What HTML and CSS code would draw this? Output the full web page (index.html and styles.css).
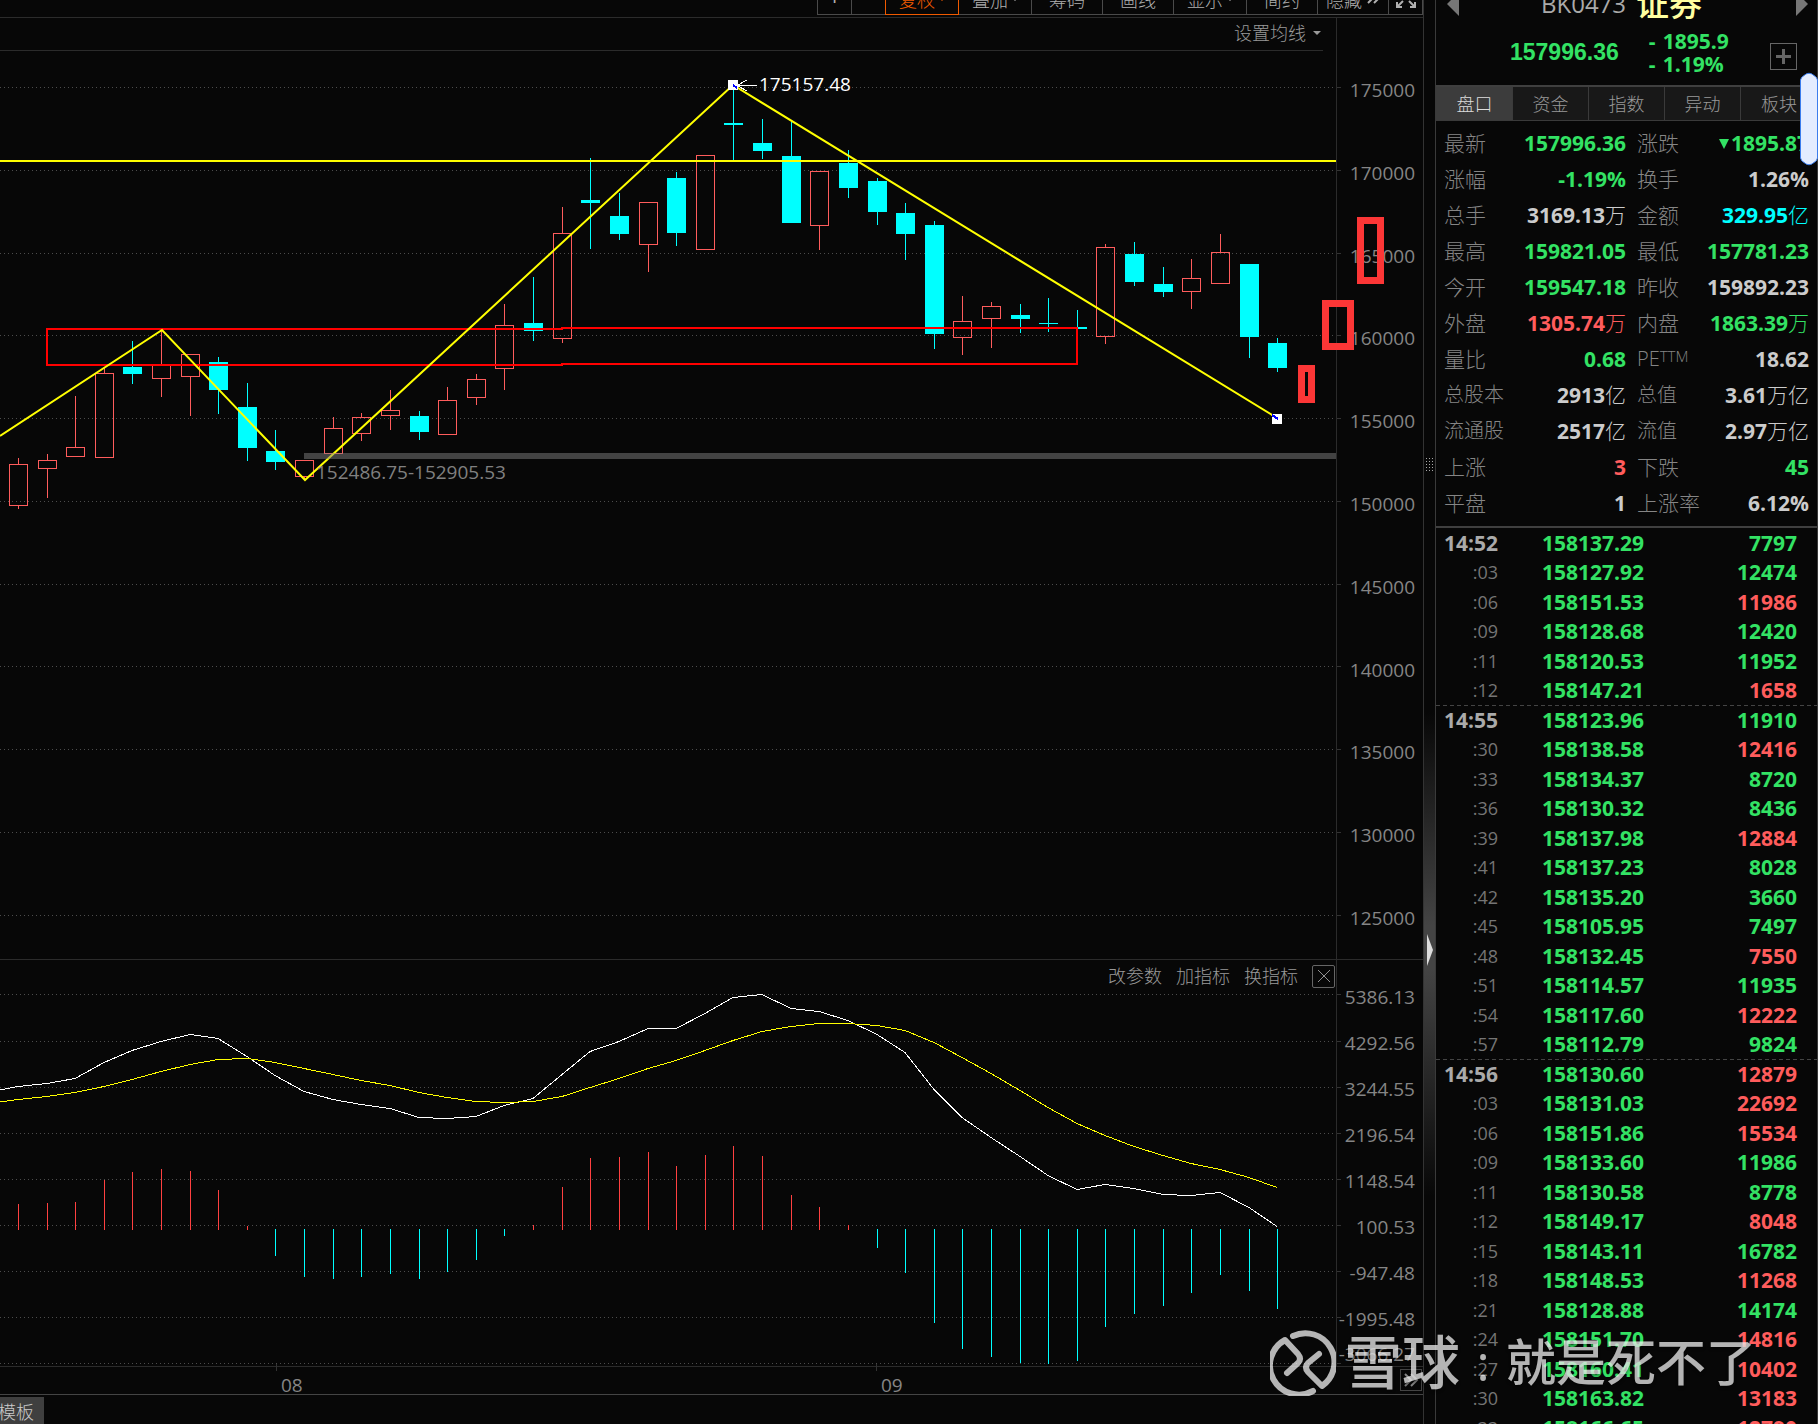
FILE: index.html
```html
<!DOCTYPE html>
<html lang="zh-CN">
<head>
  <meta charset="UTF-8" />
  <title>证券 BK0473</title>
  <link rel="stylesheet" href="styles.css">
</head>
<body>

<div class="app">
  <main class="chart-pane">
    <div class="toolbar">
      <button class="tool small plus">+</button>
      <button class="tool small"></button>
      <button class="tool wide active">复权<i class="caret"></i></button>
      <button class="tool wide">叠加<i class="caret"></i></button>
      <button class="tool">筹码</button>
      <button class="tool">画线</button>
      <button class="tool wide">显示<i class="caret"></i></button>
      <button class="tool">简约</button>
      <button class="tool">隐藏<svg width="14" height="10" viewBox="0 0 14 10"><path d="M2 1l4 4-4 4M8 1l4 4-4 4"/></svg></button>
      <button class="tool small" aria-label="全屏"><svg width="22" height="20" viewBox="0 0 22 20"><path d="M2 7V2h5M2 2l6 6M20 7V2h-5M20 2l-6 6M2 13v5h5M2 18l6-6M20 13v5h-5M20 18l-6-6"/></svg></button>
    </div>

    <section class="panel price">
      <div class="plot">
        <div class="plot-head">
          <button class="link">设置均线<i class="caret"></i></button>
        </div>
        <svg class="drawing" id="price-chart" viewBox="0 51 1336 908"></svg>
      </div>
      <ul class="axis price-axis" id="price-axis"></ul>
    </section>

    <section class="panel indicator">
      <div class="plot">
        <div class="plot-head">
          <button class="link">改参数</button>
          <button class="link">加指标</button>
          <button class="link">换指标</button>
          <button class="close" aria-label="关闭"><svg width="12" height="12" viewBox="0 0 12 12"><path d="M0 0l12 12M12 0L0 12"/></svg></button>
        </div>
        <svg class="drawing" id="macd-chart" viewBox="0 990 1336 376"></svg>
      </div>
      <ul class="axis macd-axis" id="macd-axis"></ul>
    </section>

    <div class="dates">
      <span>08</span>
      <span>09</span>
      <button class="more" aria-label="更多"><svg width="18" height="18" viewBox="0 0 18 18"><path d="M3 3l6 6-6 6M9 3l6 6-6 6"/></svg></button>
    </div>
    <div class="bottom-bar">
      <button class="template">模板</button>
    </div>
  </main>

  <div class="splitter">
    <svg class="grip" width="7" height="13" viewBox="0 0 7 13"><path d="M0 .5h7M0 3.5h7M0 6.5h7M0 9.5h7M0 12.5h7"/></svg>
    <svg class="handle" width="6" height="32" viewBox="0 0 6 32"><path d="M0 0L6 16L0 32Z"/></svg>
  </div>

  <aside class="quote">
    <header class="quote-head">
      <div class="name-row">
        <button class="arrow" aria-label="上一个"><svg width="12" height="24" viewBox="0 0 12 24"><path d="M12 0v24L0 12Z"/></svg></button>
        <h1><span class="code">BK0473</span><span>证券</span></h1>
        <button class="arrow" aria-label="下一个"><svg width="12" height="24" viewBox="0 0 12 24"><path d="M0 0v24l12-12Z"/></svg></button>
      </div>
      <div class="last-row">
        <strong class="last">157996.36</strong>
        <div class="change">
          <div><span class="sign">-</span>1895.9</div>
          <div><span class="sign">-</span>1.19%</div>
        </div>
        <button class="add" aria-label="加自选"><svg width="15" height="15" viewBox="0 0 15 15"><path d="M7.5 0v15M0 7.5h15"/></svg></button>
      </div>
    </header>

    <nav class="tabs">
      <button class="tab current">盘口</button>
      <button class="tab">资金</button>
      <button class="tab">指数</button>
      <button class="tab">异动</button>
      <button class="tab">板块</button>
    </nav>

    <table class="stats">
      <tr><th>最新</th><td class="down">157996.36</td><th>涨跌</th><td class="down"><i class="fall"></i>1895.87</td></tr>
      <tr><th>涨幅</th><td class="down">-1.19%</td><th>换手</th><td>1.26%</td></tr>
      <tr><th>总手</th><td>3169.13<small>万</small></td><th>金额</th><td class="amount">329.95<small>亿</small></td></tr>
      <tr><th>最高</th><td class="down">159821.05</td><th>最低</th><td class="down">157781.23</td></tr>
      <tr><th>今开</th><td class="down">159547.18</td><th>昨收</th><td>159892.23</td></tr>
      <tr><th>外盘</th><td class="up">1305.74<small>万</small></td><th>内盘</th><td class="down">1863.39<small>万</small></td></tr>
      <tr><th>量比</th><td class="down">0.68</td><th class="latin">PE<sup>TTM</sup></th><td>18.62</td></tr>
      <tr class="tight"><th>总股本</th><td>2913<small>亿</small></td><th>总值</th><td>3.61<small>万亿</small></td></tr>
      <tr class="tight"><th>流通股</th><td>2517<small>亿</small></td><th>流值</th><td>2.97<small>万亿</small></td></tr>
      <tr><th>上涨</th><td class="up">3</td><th>下跌</th><td class="down">45</td></tr>
      <tr><th>平盘</th><td>1</td><th>上涨率</th><td>6.12%</td></tr>
    </table>

    <div class="ticks-wrap">
      <table class="ticks">
        <tbody id="ticks"></tbody>
      </table>
    </div>

    <svg class="scroll-pill" width="18" height="94" viewBox="0 0 18 94"><path d="M.5 8Q1 5 4 3.500Q9-1 14 3.500Q17 5 17.500 8V86Q17 89 14 90.500Q9 95 4 90.500Q1 89 .5 86Z"/></svg>
  </aside>
</div>

<div class="watermark">
  <svg width="66" height="66" viewBox="0 0 66 66"><path d="M23 6A29 29 0 0 1 52 56L38 42Q34 37 38 33L49 24"/><path d="M43 61A29 29 0 0 1 15 10L28 24Q32 29 28 33L17 43"/></svg>
  <span class="brand">雪球</span>
  <span class="colon">:</span>
  <span class="author">就是死不了</span>
</div>

<script>
// direction, high, body top, body bottom, low (chart units)
const candles = [
  ['u',458,464,505,509], ['u',454,460,468,498], ['u',396,447,456,456], ['u',368,373,457,457],
  ['d',341,367,374,384], ['u',330,365,378,397], ['u',354,354,376,416], ['d',357,362,390,414],
  ['d',383,407,448,461], ['d',430,451,462,470], ['u',460,460,476,480], ['u',417,428,453,453],
  ['u',413,417,433,441], ['u',390,410,415,430], ['d',411,416,432,440], ['u',387,400,434,434],
  ['u',374,379,397,405], ['u',304,325,368,390], ['d',277,323,331,341], ['u',207,233,338,343],
  ['d',158,200,203,249], ['d',193,216,234,240], ['u',202,202,244,272], ['d',172,178,233,246],
  ['u',155,155,249,249], ['d',88,123,125,160], ['d',119,143,151,159], ['d',121,156,223,223],
  ['u',171,171,225,250], ['d',150,163,188,198], ['d',178,181,212,225], ['d',203,213,234,260],
  ['d',221,225,334,349], ['u',296,321,337,355], ['u',302,306,318,348], ['d',304,315,319,333],
  ['d',298,323,324,332], ['d',310,327,329,329], ['u',244,247,336,344], ['d',242,254,282,286],
  ['d',267,284,292,297], ['u',259,278,291,309], ['u',234,252,283,283], ['d',264,264,337,358],
  ['d',338,343,368,372]
];
const bars = [1204,1203,1202,1180,1172,1169,1171,1190,1226,1256,1277,1279,1277,1274,1279,1272,1260,1236,1225,1187,1158,1157,1152,1166,1155,1146,1156,1195,1207,1225,1248,1273,1323,1349,1357,1363,1364,1361,1327,1314,1306,1293,1275,1291,1309];
const dif = [1086,1083,1078,1062,1050,1041,1034,1038,1056,1075,1091,1099,1104,1108,1117,1118,1116,1105,1098,1074,1051,1041,1028,1028,1013,997,994,1008,1011,1020,1034,1052,1089,1117,1137,1156,1175,1189,1184,1188,1194,1195,1192,1207,1226];
const dea = [1099,1096,1092,1086,1079,1071,1064,1059,1058,1062,1068,1074,1080,1085,1092,1097,1101,1102,1101,1096,1087,1078,1068,1060,1050,1040,1031,1026,1023,1023,1025,1030,1042,1057,1073,1090,1107,1123,1135,1146,1155,1163,1169,1177,1187];

const priceLabels = [175000,170000,165000,160000,155000,150000,145000,140000,135000,130000,125000];
const macdLabels = ['5386.13','4292.56','3244.55','2196.54','1148.54','100.53','-947.48','-1995.48','-3066.27'];
const priceGrid = [87,170,253,335,418,501,584,666,749,832,915];
const macdGrid = [994,1041,1087,1133,1179,1225,1271,1317,1363];

const ticks = [
  ['14:52','158137.29',7797,'d'], [':03','158127.92',12474,'d'], [':06','158151.53',11986,'u'],
  [':09','158128.68',12420,'d'], [':11','158120.53',11952,'d'], [':12','158147.21',1658,'u'],
  ['14:55','158123.96',11910,'d'], [':30','158138.58',12416,'u'], [':33','158134.37',8720,'d'],
  [':36','158130.32',8436,'d'], [':39','158137.98',12884,'u'], [':41','158137.23',8028,'d'],
  [':42','158135.20',3660,'d'], [':45','158105.95',7497,'d'], [':48','158132.45',7550,'u'],
  [':51','158114.57',11935,'d'], [':54','158117.60',12222,'u'], [':57','158112.79',9824,'d'],
  ['14:56','158130.60',12879,'u'], [':03','158131.03',22692,'u'], [':06','158151.86',15534,'u'],
  [':09','158133.60',11986,'d'], [':11','158130.58',8778,'d'], [':12','158149.17',8048,'u'],
  [':15','158143.11',16782,'d'], [':18','158148.53',11268,'u'], [':21','158128.88',14174,'d'],
  [':24','158151.70',14816,'u'], [':27','158160.41',10402,'u'], [':30','158163.82',13183,'u'],
  [':33','158166.65',12790,'u']
];

const xAt = i => Math.round(17.9 + 28.62 * i);

function gridLines(rows) {
  return rows.map(y => `<path class="grid" d="M0 ${y + 0.5}H1334"/><path class="notch" d="M1337 ${y + 0.5}h4"/>`).join('');
}

function renderPrice() {
  let out = gridLines(priceGrid);
  candles.forEach(([dir, high, top, bottom, low], i) => {
    const x = xAt(i);
    if (dir === 'u') {
      out += `<path class="rise" d="M${x + 0.5} ${high}V${top}M${x + 0.5} ${bottom + 1}V${low}"/>`;
      out += `<rect class="rise" x="${x - 8.5}" y="${top + 0.5}" width="18" height="${bottom - top}"/>`;
    } else {
      out += `<path class="drop" d="M${x + 0.5} ${high}V${low}"/>`;
      out += `<rect class="drop-body" x="${x - 9}" y="${top}" width="19" height="${bottom - top}"/>`;
    }
  });
  out += '<path class="zone" d="M562 329H47V365H562V364H1077V328H562Z"/>';
  out += '<path class="trend" d="M0 161H1336"/>';
  out += '<path class="trend slope" d="M0 436L162 330L305 480L733 85L1277 418"/>';
  out += '<rect class="gap-bar" x="304" y="453" width="1032" height="6"/>';
  out += '<text class="gap-text" x="316" y="479">152486.75-152905.53</text>';
  // drag points at both ends of the last trend line
  out += '<rect class="anchor" x="728" y="80" width="10" height="10"/><path class="anchor-tip" d="M733 85l4 3"/>';
  out += '<rect class="anchor" x="1272" y="414" width="10" height="10"/><path class="anchor-tip" d="M1272 415l6 4"/>';
  out += '<path class="pointer" d="M738 85.5h19M738 85l9-5M738 86l9 5"/>';
  out += '<text class="peak-text" x="759" y="91">175157.48</text>';
  out += '<path class="marker" d="M1360.500 220.500h20v60h-20zM1325.500 303.500h25v43h-25zM1301.500 368.500h10v31h-10z"/>';
  document.getElementById('price-chart').innerHTML = out;
}

function renderMacd() {
  let out = gridLines(macdGrid);
  bars.forEach((y, i) => {
    const cls = y < 1229 ? 'bar-up' : 'drop';
    out += `<path class="${cls}" d="M${xAt(i) + 0.5} ${y < 1229 ? 1230 : 1229}V${y}"/>`;
  });
  const line = (start, data) => `M0 ${start}` + data.map((y, i) => `L${xAt(i)} ${y + 0.5}`).join('');
  out += `<path class="dif" d="${line(1090, dif)}"/>`;
  out += `<path class="dea" d="${line(1102, dea)}"/>`;
  out += '<path class="notch" d="M276.500 1364v7M876.500 1364v7"/>';
  document.getElementById('macd-chart').innerHTML = out;
}

function renderTicks() {
  document.getElementById('ticks').innerHTML = ticks.map(([time, price, volume, dir]) => `
    <tr class="${time.length > 3 ? 'minute' : ''}">
      <td class="time">${time}</td>
      <td class="down">${price}</td>
      <td class="${dir === 'u' ? 'up' : 'down'}">${volume}</td>
    </tr>`).join('');
}

document.getElementById('price-axis').innerHTML = priceLabels.map(v => `<li>${v}</li>`).join('');
document.getElementById('macd-axis').innerHTML = macdLabels.map(v => `<li>${v}</li>`).join('');
renderPrice();
renderMacd();
renderTicks();
</script>

</body>
</html>
```

FILE: styles.css
```css
* { box-sizing: border-box; }
body { margin: 0; background: #070707; color: #858585; font-family: "Open Sans", "Noto Sans CJK SC", sans-serif; font-size: 18px; overflow: hidden; }
button { font: inherit; color: inherit; background: none; border: 0; padding: 0; }
svg { display: block; flex: none; fill: none; stroke: currentColor; }

.app { display: flex; height: 100vh; }
.chart-pane { flex: 1; min-width: 0; display: flex; flex-direction: column; border-right: 1px solid #333; }

/* toolbar */
.toolbar { height: 17px; padding-bottom: 2px; display: flex; justify-content: flex-end; align-items: flex-end; overflow: hidden; }
.tool { flex: none; display: flex; align-items: center; justify-content: center; gap: 4px; width: 72px; height: 32px; margin-left: -1px; border: 1px solid #4a4a4a; color: #b0b0b0; font-weight: 300; }
.tool.small { width: 35px; }
.tool.wide { width: 74px; }
.tool.plus { padding-bottom: 6px; font-size: 24px; font-weight: 400; }
.tool.active { border-color: #f05a00; color: #f05a00; position: relative; }
.tool svg { stroke-width: 2; }
.caret { border: 4px solid transparent; border-top-color: currentColor; border-bottom: 0; }
.tool .caret { border-width: 3px 3px 0; }

/* charts */
.panel { display: flex; border-top: 1px solid #2b2b2b; }
.price { flex: 1; min-height: 0; }
.indicator { height: 407px; }
.plot { flex: 1; min-width: 0; display: flex; flex-direction: column; }
.plot-head { flex: none; display: flex; justify-content: flex-end; align-items: center; gap: 14px; }
.price .plot-head { height: 33px; margin-right: 13px; padding: 0 2px 2px 0; border-bottom: 1px solid #2b2b2b; }
.indicator .plot-head { height: 30px; padding: 2px 1px 0 0; }
.link { display: flex; align-items: center; gap: 7px; font-weight: 300; line-height: 24px; color: #999; }
.close { display: flex; align-items: center; justify-content: center; width: 23px; height: 23px; border: 1px solid #666; border-radius: 2px; color: #909090; }
.drawing { position: relative; flex: 1; min-height: 0; width: 100%; overflow: visible; shape-rendering: crispEdges; }

.axis { list-style: none; margin: 0; width: 87px; padding: 0 8px 0 0; border-left: 1px solid #2b2b2b; text-align: right; font-size: 19px; line-height: 24px; white-space: nowrap; }
.price-axis { display: flex; flex-direction: column; justify-content: space-between; padding-top: 60px; padding-bottom: 29px; }
.macd-axis { padding-top: 25px; }
.macd-axis li { height: 46px; }
.macd-axis li:last-child { height: 24px; margin-top: -11px; }

.grid { stroke: #4c4c4c; stroke-dasharray: 1 3; }
.notch { stroke: #333; }
.rise { stroke: #ff5c5c; }
.bar-up { stroke: #ff4040; }
.drop { stroke: #00ffff; }
.drop-body { fill: #00ffff; stroke: none; }
.zone { stroke: #ff0000; stroke-width: 2; }
.trend { stroke: #ffff00; stroke-width: 2; }
.slope { shape-rendering: auto; }
.gap-bar { fill: rgba(128, 128, 128, 0.5); stroke: none; }
.gap-text { fill: #808080; stroke: none; font-size: 19px; }
.peak-text { fill: #fff; stroke: none; font-size: 19px; }
.anchor { fill: #fff; stroke: none; }
.anchor-tip { stroke: #0000ff; stroke-width: 2; }
.pointer { stroke: #fff; }
.marker { stroke: #fc3636; stroke-width: 7; }
.dif { stroke: #fff; }
.dea { stroke: #ffff00; }

.dates { display: grid; grid-template-columns: 281px 600px 1fr; align-items: start; height: 28px; padding-top: 6px; border-top: 1px solid #2b2b2b; font-size: 19px; line-height: 24px; }
.dates span { grid-column: 3; grid-row: 1; }
.dates span:first-child { grid-column: 2; }
.more { grid-column: 3; grid-row: 1; justify-self: end; display: flex; align-items: center; justify-content: center; width: 22px; height: 22px; margin: -4px 1px 0 0; border: 1px solid #444; }
.more svg { stroke-width: 2; }
.bottom-bar { flex: none; height: 30px; padding-top: 2px; border-top: 1px solid #444; background: linear-gradient(90deg, #3f3f3f 44px, transparent 44px) 0 2px no-repeat; overflow: hidden; }
.template { display: block; width: 44px; height: 27px; padding-right: 10px; color: #ccc; text-align: right; direction: rtl; white-space: nowrap; font-weight: 300; }

/* splitter */
.splitter { width: 11px; display: flex; flex-direction: column; align-items: center; background: linear-gradient(#070707 50%, #444 65%, #444 68%, #070707 84%); }
.grip { margin-top: 458px; stroke: #aaa; stroke-dasharray: 1 2; }
.handle { margin-top: 463px; fill: #ddd; stroke: none; }

/* quote */
.quote { position: relative; width: 383px; display: flex; flex-direction: column; border: 1px solid #3a3a3a; border-width: 0 1px; }
.quote-head { height: 85px; overflow: hidden; }
.name-row { display: flex; justify-content: space-between; align-items: center; height: 48px; margin-top: -20px; padding: 0 9px 0 11px; }
.arrow { color: #777; }
.arrow svg { fill: currentColor; stroke: none; }
h1 { display: flex; align-items: center; gap: 10px; margin: 0 12px 0 0; font-size: 33px; line-height: 48px; font-weight: 500; color: #ffffa0; white-space: nowrap; }
.code { font-size: 24px; font-weight: 400; color: #aaa; }
.last-row { display: flex; align-items: flex-start; height: 57px; padding: 2px 20px 0 74px; }
.last { margin-top: 8px; font: bold 23px/28px "Liberation Sans", sans-serif; color: #33e264; }
.change { margin-left: 30px; font-size: 21px; line-height: 23px; font-weight: 700; color: #33e264; }
.sign { display: inline-block; width: 14px; }
.add { display: flex; align-items: center; justify-content: center; margin: 13px 0 0 auto; width: 27px; height: 27px; border: 1px solid #666; color: #666; }
.add svg { stroke-width: 3; }

.tabs { display: grid; grid-template-columns: repeat(4, 76px) 1fr; height: 36px; border-top: 2px solid #3f3f3f; border-bottom: 1px solid #3a3a3a; }
.tab { border-left: 1px solid #3a3a3a; background: #181818; color: #999; font-weight: 300; line-height: 24px; }
.tab.current { background: #3c3c3c; border-color: #3c3c3c; color: #ddd; }

.up { color: #ff5c5c; }
.down { color: #33e264; }
.stats { border-collapse: collapse; table-layout: fixed; width: 100%; margin-top: 4px; }
.stats tr { height: 36px; }
.stats th, .stats td { padding: 0; line-height: 24px; white-space: nowrap; }
.stats th { width: 76px; padding-left: 8px; text-align: left; font-size: 21px; font-weight: 300; }
.stats th:nth-child(3) { width: 80px; padding-left: 11px; }
.stats .tight th { font-size: 20px; }
.stats .latin { font-size: 20px; }
.stats sup { font-size: 15px; line-height: 0; vertical-align: 4px; }
.stats td { width: 114px; text-align: right; font-size: 21px; font-weight: 700; }
.stats td:last-child { width: auto; padding-right: 8px; }
.stats td:not(.up):not(.down) { color: #ccc; }
.stats td.amount:not(.up) { color: #00ffff; }
.stats small { font-size: 21px; font-weight: 300; }
.fall { display: inline-block; border: 5px solid transparent; border-top: 10px solid currentColor; border-bottom: 0; margin-right: 2px; vertical-align: 2px; }

.ticks-wrap { flex: 1; min-height: 0; margin-top: 5px; border-top: 2px solid #3f3f3f; overflow: hidden; }
.ticks { border-collapse: collapse; table-layout: fixed; width: 100%; text-align: right; font-size: 21px; font-weight: 700; }
.ticks tr { height: 29px; }
.ticks tr:nth-child(even) { height: 30px; }
.ticks td { padding: 0; line-height: 24px; }
.ticks td:nth-child(1) { width: 62px; }
.ticks td:nth-child(2) { width: 146px; }
.ticks td:nth-child(3) { padding-right: 20px; }
.ticks .time { font-size: 18px; font-weight: 400; color: #757575; }
.ticks .minute .time { font-size: 21px; font-weight: 700; color: #aaa; }
tr + .minute { background: repeating-linear-gradient(90deg, #444 0 4px, transparent 4px 7px) top / 100% 1px no-repeat; }

.scroll-pill { position: absolute; right: -1px; top: 72px; fill: #e3ecff; stroke: #3b7ded; }

.watermark { position: fixed; left: 1270px; bottom: 25px; display: flex; align-items: center; height: 72px; color: rgba(255, 255, 255, 0.7); font-size: 50px; line-height: 70px; font-weight: 500; white-space: nowrap; text-shadow: 0 2px 3px rgba(0, 0, 0, 0.4); pointer-events: none; }
.watermark span { height: 72px; }
.watermark svg { stroke-width: 6; stroke-linecap: round; stroke-linejoin: round; }
.brand { margin-left: 8px; font-size: 58px; }
.colon { width: 46px; text-align: center; }
```
